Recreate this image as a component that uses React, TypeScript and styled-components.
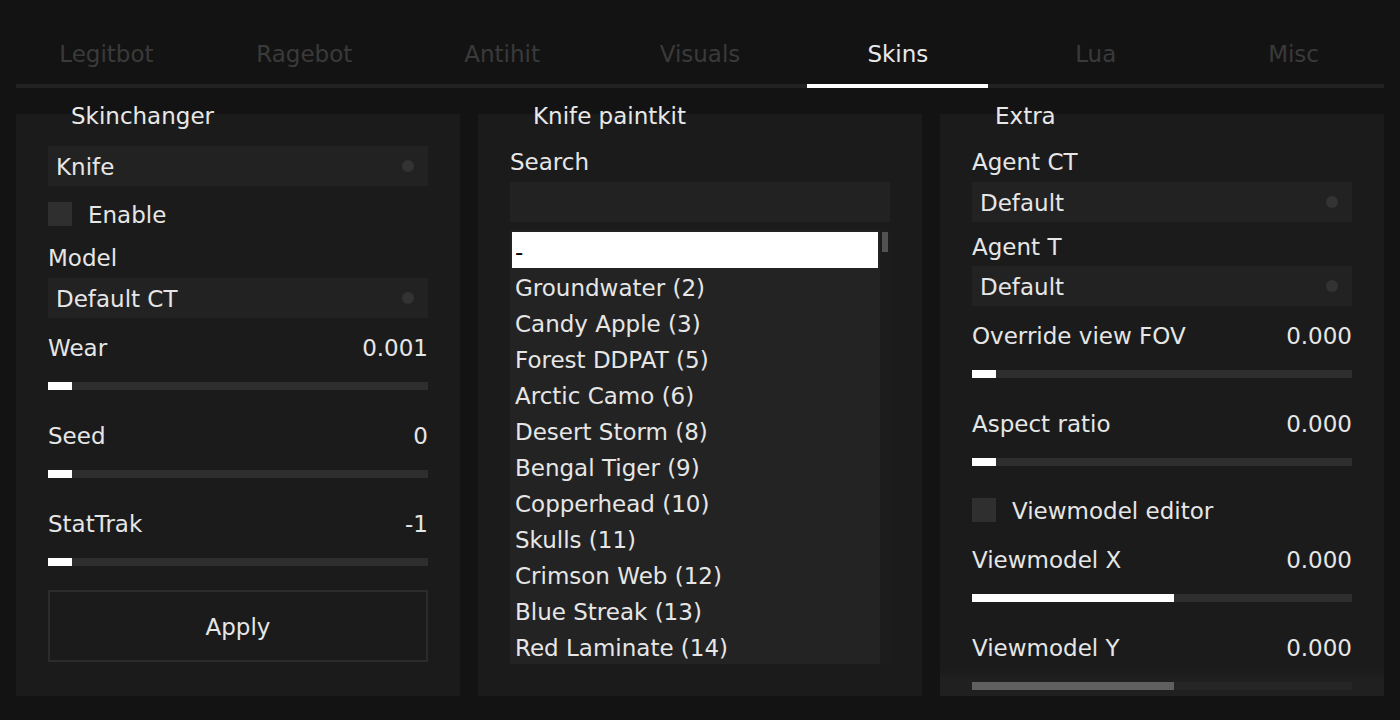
import React from "react";
import styled, { createGlobalStyle, css } from "styled-components";

const GlobalStyle = createGlobalStyle`
  html, body { margin: 0; padding: 0; background: #131313; }
  body {
    font-family: "DejaVu Sans", Verdana, sans-serif;
    font-size: 23px;
    color: #e6e6e6;
    -webkit-font-smoothing: antialiased;
  }
  * { box-sizing: border-box; }
`;

const Page = styled.div`
  width: 1400px;
  height: 720px;
  padding: 0 16px;
  overflow: hidden;
`;

const TabBar = styled.div`
  display: grid;
  grid-template-columns: repeat(7, 1fr);
  column-gap: 17px;
  height: 88px;
  border-bottom: 4px solid #222222;
`;

const Tab = styled.div<{ $active?: boolean }>`
  display: flex;
  align-items: center;
  justify-content: center;
  padding-top: 24px;
  margin-bottom: -4px;
  line-height: 24px;
  color: ${(p) => (p.$active ? "#e8e8e8" : "#3a3a3a")};
  border-bottom: 4px solid ${(p) => (p.$active ? "#ffffff" : "transparent")};
`;

const Columns = styled.div`
  display: grid;
  grid-template-columns: repeat(3, 1fr);
  column-gap: 18px;
  margin-top: 26px;
  height: 582px;
`;

const Panel = styled.section<{ $fade?: boolean }>`
  position: relative;
  background: #1b1b1b;
  padding: 32px 32px 0;
  display: flex;
  flex-direction: column;
  ${(p) =>
    p.$fade &&
    css`
      &::after {
        content: "";
        position: absolute;
        left: 0;
        right: 0;
        bottom: 0;
        height: 28px;
        background: linear-gradient(to bottom, rgba(34, 34, 34, 0), rgba(34, 34, 34, 0.72) 45%, rgba(34, 34, 34, 0.72));
        pointer-events: none;
      }
    `}
`;

const Title = styled.h2`
  position: absolute;
  top: -10px;
  left: 55px;
  margin: 0;
  font-size: 23px;
  font-weight: normal;
  line-height: 24px;
  color: #e8e8e8;
`;

const Label = styled.div<{ $mt: number }>`
  margin-top: ${(p) => p.$mt}px;
  line-height: 26px;
  height: 24px;
`;

const Combo = styled.div<{ $mt: number }>`
  margin-top: ${(p) => p.$mt}px;
  height: 40px;
  flex: none;
  background: #222222;
  display: flex;
  align-items: center;
  justify-content: space-between;
  padding: 2px 14px 0 8px;
  line-height: 24px;
`;

const Dot = styled.span`
  width: 12px;
  height: 12px;
  margin-top: -2px;
  border-radius: 50%;
  background: #333333;
`;

const Check = styled.div<{ $mt: number }>`
  margin-top: ${(p) => p.$mt}px;
  display: flex;
  align-items: center;
  gap: 16px;
  height: 24px;
  line-height: 24px;
`;

const CheckText = styled.span`
  padding-top: 2px;
`;

const Box = styled.span`
  width: 24px;
  height: 24px;
  background: #2f2f2f;
  flex: none;
`;

const SliderBlock = styled.div<{ $mt: number }>`
  margin-top: ${(p) => p.$mt}px;
  display: flex;
  flex-direction: column;
  gap: 23px;
`;

const SliderHead = styled.div`
  display: flex;
  justify-content: space-between;
  line-height: 26px;
  height: 24px;
`;

const Track = styled.div`
  height: 8px;
  background: #2e2e2e;
`;

const Fill = styled.div`
  height: 100%;
  background: #ffffff;
`;

const Button = styled.button<{ $mt: number }>`
  margin-top: ${(p) => p.$mt}px;
  height: 72px;
  background: transparent;
  border: 2px solid #2c2c2c;
  color: #e6e6e6;
  font-family: inherit;
  font-size: 23px;
  padding: 2px 0 0;
`;

const Input = styled.div<{ $mt: number }>`
  margin-top: ${(p) => p.$mt}px;
  height: 40px;
  background: #222222;
`;

const ListBox = styled.div<{ $mt: number }>`
  margin-top: ${(p) => p.$mt}px;
  height: 434px;
  display: flex;
`;

const List = styled.ul`
  flex: 1;
  margin: 0;
  padding: 2px;
  list-style: none;
  background: #232323;
  overflow: hidden;
`;

const Item = styled.li<{ $selected?: boolean }>`
  height: 36px;
  line-height: 32px;
  padding: 4px 0 0 3px;
  white-space: nowrap;
  background: ${(p) => (p.$selected ? "#ffffff" : "transparent")};
  color: ${(p) => (p.$selected ? "#000000" : "#e6e6e6")};
`;

const ScrollBar = styled.div`
  width: 10px;
  background: #1c1c1c;
  padding: 2px;
`;

const Grab = styled.div`
  width: 6px;
  height: 20px;
  background: #525252;
`;

const tabs = ["Legitbot", "Ragebot", "Antihit", "Visuals", "Skins", "Lua", "Misc"];

const paintkits = [
  "-",
  "Groundwater (2)",
  "Candy Apple (3)",
  "Forest DDPAT (5)",
  "Arctic Camo (6)",
  "Desert Storm (8)",
  "Bengal Tiger (9)",
  "Copperhead (10)",
  "Skulls (11)",
  "Crimson Web (12)",
  "Blue Streak (13)",
  "Red Laminate (14)",
];

const Slider = ({ mt, label, value, pct }: { mt: number; label: string; value: string; pct: number }) => (
  <SliderBlock $mt={mt}>
    <SliderHead>
      <span>{label}</span>
      <span>{value}</span>
    </SliderHead>
    <Track>
      <Fill style={{ width: `${pct}%` }} />
    </Track>
  </SliderBlock>
);

export default function App() {
  return (
    <Page>
      <GlobalStyle />
      <TabBar>
        {tabs.map((t) => (
          <Tab key={t} $active={t === "Skins"}>
            {t}
          </Tab>
        ))}
      </TabBar>
      <Columns>
        <Panel>
          <Title>Skinchanger</Title>
          <Combo $mt={0}>
            <span>Knife</span>
            <Dot />
          </Combo>
          <Check $mt={16}>
            <Box />
            <CheckText>Enable</CheckText>
          </Check>
          <Label $mt={19}>Model</Label>
          <Combo $mt={9}>
            <span>Default CT</span>
            <Dot />
          </Combo>
          <Slider mt={17} label="Wear" value="0.001" pct={6.3} />
          <Slider mt={33} label="Seed" value="0" pct={6.3} />
          <Slider mt={33} label="StatTrak" value="-1" pct={6.3} />
          <Button $mt={24}>Apply</Button>
        </Panel>
        <Panel>
          <Title>Knife paintkit</Title>
          <Label $mt={3}>Search</Label>
          <Input $mt={9} />
          <ListBox $mt={8}>
            <List>
              {paintkits.map((p, i) => (
                <Item key={p} $selected={i === 0}>
                  {p}
                </Item>
              ))}
            </List>
            <ScrollBar>
              <Grab />
            </ScrollBar>
          </ListBox>
        </Panel>
        <Panel $fade>
          <Title>Extra</Title>
          <Label $mt={3}>Agent CT</Label>
          <Combo $mt={9}>
            <span>Default</span>
            <Dot />
          </Combo>
          <Label $mt={12}>Agent T</Label>
          <Combo $mt={8}>
            <span>Default</span>
            <Dot />
          </Combo>
          <Slider mt={17} label="Override view FOV" value="0.000" pct={6.3} />
          <Slider mt={33} label="Aspect ratio" value="0.000" pct={6.3} />
          <Check $mt={32}>
            <Box />
            <CheckText>Viewmodel editor</CheckText>
          </Check>
          <Slider mt={25} label="Viewmodel X" value="0.000" pct={53.2} />
          <Slider mt={33} label="Viewmodel Y" value="0.000" pct={53.2} />
        </Panel>
      </Columns>
    </Page>
  );
}
